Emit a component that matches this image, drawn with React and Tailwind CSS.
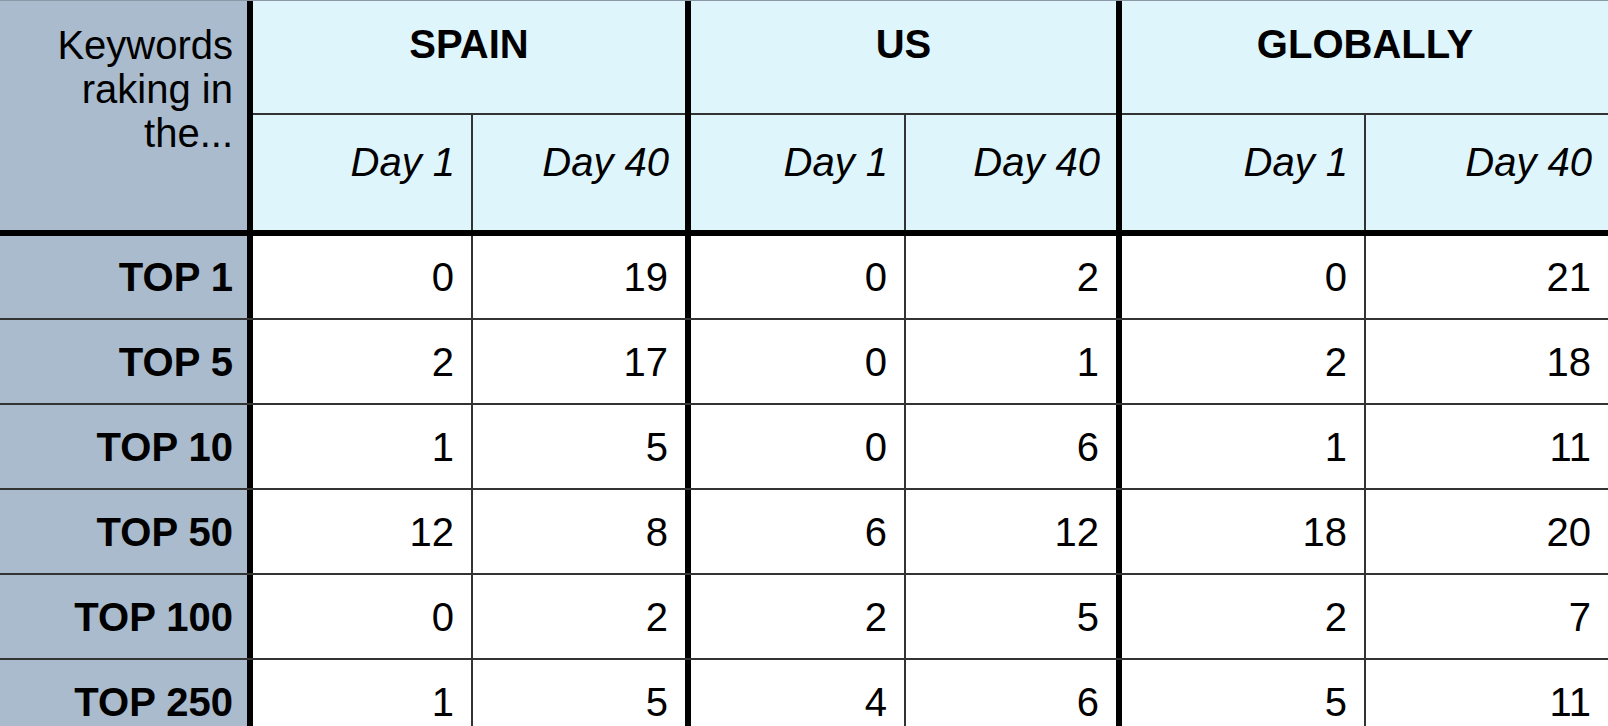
import React from 'react';

const groups = [
  { id: 'spain', name: 'SPAIN', width: 'w-[438px]', first: 'w-[220px]' },
  { id: 'us', name: 'US', width: 'w-[431px]', first: 'w-[215px]' },
  { id: 'global', name: 'GLOBALLY', width: 'flex-1', first: 'w-[244px]', last: true },
];

const rows = [
  { label: 'TOP 1', values: [0, 19, 0, 2, 0, 21] },
  { label: 'TOP 5', values: [2, 17, 0, 1, 2, 18] },
  { label: 'TOP 10', values: [1, 5, 0, 6, 1, 11] },
  { label: 'TOP 50', values: [12, 8, 6, 12, 18, 20] },
  { label: 'TOP 100', values: [0, 2, 2, 5, 2, 7] },
  { label: 'TOP 250', values: [1, 5, 4, 6, 5, 11] },
];

// widths + right border of each data column, in order
const cols = [
  'w-[220px] border-r-[2px] border-[#333]',
  'w-[218px] border-r-[6px] border-black',
  'w-[215px] border-r-[2px] border-[#333]',
  'w-[216px] border-r-[6px] border-black',
  'w-[244px] border-r-[2px] border-[#333]',
  'flex-1',
];

const App = () => {
  return (
    <div className="w-[1608px] h-[726px] overflow-hidden bg-white border-t border-[#8a99a5] text-black text-[40px] font-['Liberation_Sans',Arial,sans-serif]">
      {/* Header */}
      <div className="flex h-[235px] border-b-[6px] border-black">
        <div className="w-[253px] border-r-[6px] border-black bg-[#a9bbcc] text-right pr-[14px] pt-[22px] leading-[44px]">
          Keywords
          <br />
          raking in
          <br />
          the...
        </div>
        {groups.map((g) => (
          <div
            key={g.id}
            className={`${g.width} flex flex-col bg-[#dff5fc] ${g.last ? '' : 'border-r-[6px] border-black'}`}
          >
            <div className="h-[114px] border-b-[2px] border-[#333] text-center font-bold pt-[21px] leading-[44px]">
              {g.name}
            </div>
            <div className="flex flex-1 italic leading-[44px]">
              <div className={`${g.first} border-r-[2px] border-[#333] text-right pr-[16px] pt-[25px]`}>Day 1</div>
              <div className="flex-1 text-right pr-[16px] pt-[25px]">Day 40</div>
            </div>
          </div>
        ))}
      </div>

      {/* Rows */}
      {rows.map((row, i) => (
        <div
          key={row.label}
          className={`flex ${i === 0 ? 'h-[84px]' : 'h-[85px]'} border-b-[2px] border-[#333]`}
        >
          <div className="w-[253px] border-r-[6px] border-black bg-[#a9bbcc] flex items-center justify-end pr-[14px] font-bold leading-[44px]">
            {row.label}
          </div>
          {row.values.map((v, j) => (
            <div key={j} className={`${cols[j]} flex items-center justify-end pr-[17px] leading-[44px]`}>
              {v}
            </div>
          ))}
        </div>
      ))}
    </div>
  );
};

export default App;
